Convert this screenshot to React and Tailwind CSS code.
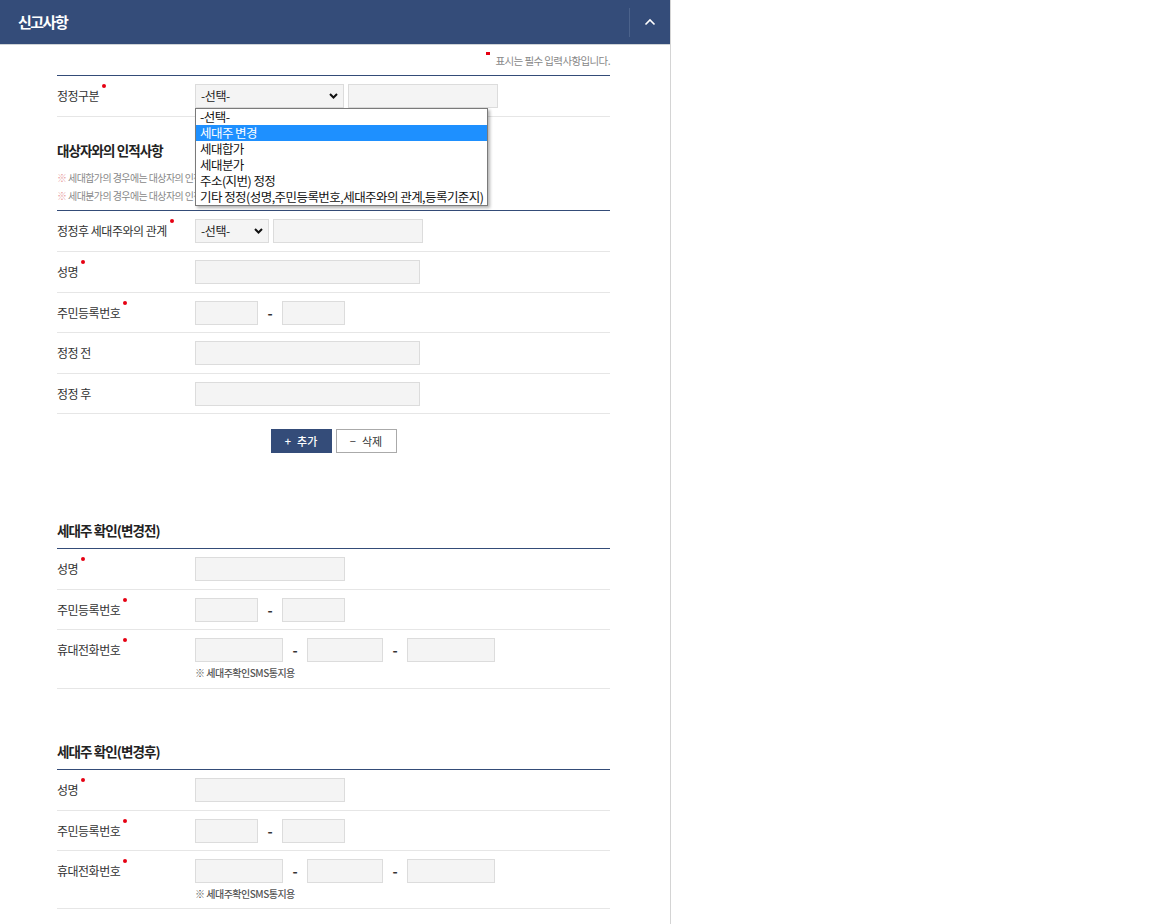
import React from "react";

function Dot() {
  return (
    <span className="absolute -right-[7px] top-[-3px] w-[4px] h-[4px] rounded-full bg-[#e60012]" />
  );
}

function Label({ children, req }) {
  return (
    <div className="w-[138px] shrink-0 text-[12px] tracking-[-0.5px] text-[#333]">
      <span className="relative">
        {children}
        {req && <Dot />}
      </span>
    </div>
  );
}

function Input({ w }) {
  return <div className={`${w} h-[24px] border border-[#dcdcdc] bg-[#f4f4f4] shrink-0`} />;
}

function Select({ w, children }) {
  return (
    <div
      className={`${w} relative h-[24px] border border-[#dcdcdc] bg-[#f4f4f4] shrink-0 flex items-center justify-between pl-[5px] pr-[5px] text-[12px] tracking-[-0.4px] text-[#222]`}
    >
      <span>-선택-</span>
      <svg width="9" height="6" viewBox="0 0 9 6">
        <polyline points="1,1 4.5,4.5 8,1" fill="none" stroke="#111" strokeWidth="2" />
      </svg>
      {children}
    </div>
  );
}

function Dash() {
  return <div className="w-[24px] shrink-0 text-center text-[14px] font-bold text-[#333] leading-none">-</div>;
}

function Row({ h, label, req, children }) {
  return (
    <div className={`${h} flex items-center border-b border-[#e6e6e6]`}>
      <Label req={req}>{label}</Label>
      <div className="flex items-center">{children}</div>
    </div>
  );
}

function PhoneRow({ h }) {
  return (
    <div className={`${h} flex items-start pt-[8px] border-b border-[#e6e6e6]`}>
      <div className="h-[24px] flex items-center">
        <Label req>휴대전화번호</Label>
      </div>
      <div className="flex flex-col">
        <div className="flex items-center">
          <Input w="w-[88px]" />
          <Dash />
          <Input w="w-[76px]" />
          <Dash />
          <Input w="w-[88px]" />
        </div>
        <div className="mt-[4px] text-[10px] font-medium tracking-[-0.5px] leading-[14px] text-[#555]">※ 세대주확인SMS통지용</div>
      </div>
    </div>
  );
}

function Ssn() {
  return (
    <>
      <Input w="w-[63px]" />
      <Dash />
      <Input w="w-[63px]" />
    </>
  );
}

const options = [
  "-선택-",
  "세대주 변경",
  "세대합가",
  "세대분가",
  "주소(지번) 정정",
  "기타 정정(성명,주민등록번호,세대주와의 관계,등록기준지)",
];

export default function App() {
  return (
    <div className="min-h-[924px] w-full bg-white font-['Noto_Sans_CJK_KR','Noto_Sans',sans-serif] text-[#333]">
      <div className="w-[671px] min-h-[924px] border-r border-[#d4d4d4]">
        <header className="h-[45px] bg-[#344c79] border-b border-[#cfd3d6] flex items-center">
          <div className="flex-1 pl-[18px] text-[15px] font-bold tracking-[-1.5px] text-white">신고사항</div>
          <div className="w-px h-[29px] bg-[#4b628b]" />
          <div className="w-[40px] flex items-center justify-center">
            <svg width="12" height="8" viewBox="0 0 12 8">
              <polyline points="1.5,6.5 6,2 10.5,6.5" fill="none" stroke="#fff" strokeWidth="1.6" />
            </svg>
          </div>
        </header>

        <div className="pl-[57px] pr-[60px]">
          <div className="h-[30px] flex items-center justify-end pt-[1px] text-[10.5px] tracking-[-0.6px] text-[#888]">
            <span className="relative">
              <span className="absolute -left-[9px] top-[-1px] w-[4px] h-[3px] bg-[#e60012]" />
              표시는 필수 입력사항입니다.
            </span>
          </div>

          <div className="border-t border-[#344c78]">
            <div className="h-[41px] flex items-center border-b border-[#e6e6e6]">
              <Label req>정정구분</Label>
              <div className="flex items-center gap-[4px]">
                <Select w="w-[149px]">
                  <div className="absolute left-[-1px] top-[23px] z-10 w-[293px] border border-[#7a7a7a] bg-white shadow-[2px_2px_3px_rgba(0,0,0,0.3)]">
                    {options.map((o, i) => (
                      <div
                        key={o}
                        className={`h-[16px] leading-[16px] pl-[4px] text-[12.5px] tracking-[-0.55px] whitespace-nowrap ${
                          i === 1 ? "bg-[#1e90ff] text-white" : "text-[#111]"
                        }`}
                      >
                        {o}
                      </div>
                    ))}
                  </div>
                </Select>
                <Input w="w-[150px]" />
              </div>
            </div>
          </div>

          <div className="mt-[23px] h-[20px] leading-[20px] text-[13.5px] font-bold tracking-[-0.9px] text-[#222]">대상자와의 인적사항</div>
          <div className="mt-[9px] text-[10px] leading-[18px] tracking-[-0.6px] text-[#888]">
            <div>
              <span className="text-[#e8a0a0]">※</span> 세대합가의 경우에는 대상자의 인적사항을 모두 입력하시기 바랍니다.
            </div>
            <div>
              <span className="text-[#e8a0a0]">※</span> 세대분가의 경우에는 대상자의 인적사항과 분가 후 세대주와의 관계를 빠짐없이 모두 입력하시기 바랍니다.
            </div>
          </div>

          <div className="mt-[5px] border-t border-[#344c78]">
            <Row h="h-[41px]" label="정정후 세대주와의 관계" req>
              <div className="flex items-center gap-[4px]">
                <Select w="w-[74px]" />
                <Input w="w-[150px]" />
              </div>
            </Row>
            <Row h="h-[41px]" label="성명" req>
              <Input w="w-[225px]" />
            </Row>
            <Row h="h-[40px]" label="주민등록번호" req>
              <Ssn />
            </Row>
            <Row h="h-[41px]" label="정정 전">
              <Input w="w-[225px]" />
            </Row>
            <Row h="h-[40px]" label="정정 후">
              <Input w="w-[225px]" />
            </Row>
          </div>

          <div className="mt-[15px] flex justify-center gap-[4px]">
            <button className="w-[61px] h-[24px] bg-[#344c79] text-white text-[11px] font-medium flex items-center justify-center gap-[6px]">
              <span>+</span>
              <span>추가</span>
            </button>
            <button className="w-[61px] h-[24px] bg-white border border-[#aaa] text-[#333] text-[11px] flex items-center justify-center gap-[6px]">
              <span>−</span>
              <span>삭제</span>
            </button>
          </div>

          <div className="mt-[67px] h-[20px] leading-[20px] text-[13.5px] font-bold tracking-[-0.9px] text-[#222]">세대주 확인(변경전)</div>
          <div className="mt-[8px] border-t border-[#344c78]">
            <Row h="h-[41px]" label="성명" req>
              <Input w="w-[150px]" />
            </Row>
            <Row h="h-[40px]" label="주민등록번호" req>
              <Ssn />
            </Row>
            <PhoneRow h="h-[59px]" />
          </div>

          <div className="mt-[52px] h-[20px] leading-[20px] text-[13.5px] font-bold tracking-[-0.9px] text-[#222]">세대주 확인(변경후)</div>
          <div className="mt-[8px] border-t border-[#344c78]">
            <Row h="h-[41px]" label="성명" req>
              <Input w="w-[150px]" />
            </Row>
            <Row h="h-[40px]" label="주민등록번호" req>
              <Ssn />
            </Row>
            <PhoneRow h="h-[58px]" />
          </div>
        </div>
      </div>
    </div>
  );
}
